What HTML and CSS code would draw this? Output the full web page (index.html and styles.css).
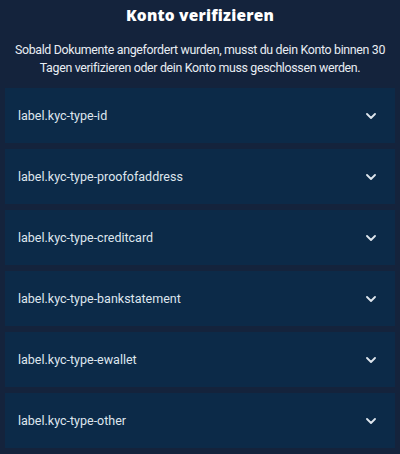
FILE: index.html
```html
<!DOCTYPE html>
<html lang="de">
<head>
<meta charset="utf-8">
<title>Konto verifizieren</title>
<link rel="stylesheet" href="styles.css">
</head>
<body>
<div class="page">
  <h1 class="title">Konto verifizieren</h1>
  <p class="intro">Sobald Dokumente angefordert wurden, musst du dein Konto binnen 30 Tagen verifizieren oder dein Konto muss geschlossen werden.</p>
  <div class="list">
    <div class="item"><span class="label">label.kyc-type-id</span><svg class="chev" viewBox="0 0 10 6" width="10" height="6"><path d="M1 1l4 4 4-4" fill="none" stroke="currentColor" stroke-width="1.8" stroke-linecap="round" stroke-linejoin="round"/></svg></div>
    <div class="item"><span class="label">label.kyc-type-proofofaddress</span><svg class="chev" viewBox="0 0 10 6" width="10" height="6"><path d="M1 1l4 4 4-4" fill="none" stroke="currentColor" stroke-width="1.8" stroke-linecap="round" stroke-linejoin="round"/></svg></div>
    <div class="item"><span class="label">label.kyc-type-creditcard</span><svg class="chev" viewBox="0 0 10 6" width="10" height="6"><path d="M1 1l4 4 4-4" fill="none" stroke="currentColor" stroke-width="1.8" stroke-linecap="round" stroke-linejoin="round"/></svg></div>
    <div class="item"><span class="label">label.kyc-type-bankstatement</span><svg class="chev" viewBox="0 0 10 6" width="10" height="6"><path d="M1 1l4 4 4-4" fill="none" stroke="currentColor" stroke-width="1.8" stroke-linecap="round" stroke-linejoin="round"/></svg></div>
    <div class="item"><span class="label">label.kyc-type-ewallet</span><svg class="chev" viewBox="0 0 10 6" width="10" height="6"><path d="M1 1l4 4 4-4" fill="none" stroke="currentColor" stroke-width="1.8" stroke-linecap="round" stroke-linejoin="round"/></svg></div>
    <div class="item"><span class="label">label.kyc-type-other</span><svg class="chev" viewBox="0 0 10 6" width="10" height="6"><path d="M1 1l4 4 4-4" fill="none" stroke="currentColor" stroke-width="1.8" stroke-linecap="round" stroke-linejoin="round"/></svg></div>
  </div>
</div>
</body>
</html>
```

FILE: styles.css
```css
html, body {
  margin: 0;
  padding: 0;
  background: #14233c;
}
.page {
  width: 400px;
  height: 454px;
  box-sizing: border-box;
  padding: 4px 5px 0;
  font-family: Roboto, "Liberation Sans", sans-serif;
  color: #e6ebf1;
}
.title {
  margin: 0;
  text-align: center;
  font-family: "Open Sans", Lato, sans-serif;
  font-weight: 800;
  font-size: 15.5px;
  line-height: 22px;
  color: #ffffff;
  letter-spacing: 0.2px;
}
.intro {
  margin: 15px 0 0;
  padding: 0 8px;
  text-align: center;
  font-size: 12.4px;
  letter-spacing: -0.33px;
  line-height: 18px;
  color: #e8edf3;
}
.list {
  margin-top: 11px;
  display: flex;
  flex-direction: column;
  gap: 6px;
}
.item {
  height: 55px;
  background: #0c2a48;
  display: flex;
  align-items: center;
  justify-content: space-between;
  padding: 0 19px 0 13px;
}
.label {
  font-size: 12.5px;
  color: #dfe6ee;
}
.chev {
  color: #dfe6ee;
  display: block;
}
```
